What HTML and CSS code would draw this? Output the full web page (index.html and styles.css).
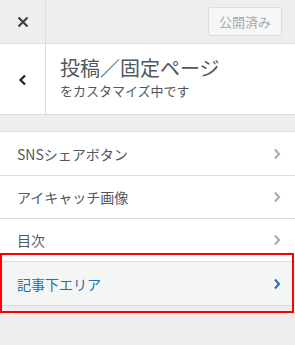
FILE: index.html
```html
<!DOCTYPE html>
<html lang="ja">
<head>
<meta charset="utf-8">
<link rel="stylesheet" href="styles.css">
</head>
<body>
<div class="panel">
  <div class="topbar">
    <div class="close">
      <svg width="12" height="12" viewBox="0 0 12 12"><path d="M1.5 1.5 L10.5 10.5 M10.5 1.5 L1.5 10.5" stroke="#3c434a" stroke-width="2.2" stroke-linecap="butt"/></svg>
    </div>
    <div class="publish">公開済み</div>
  </div>
  <div class="header">
    <div class="back">
      <svg width="10" height="12" viewBox="0 0 10 12"><path d="M7 1.5 L2.5 6 L7 10.5" fill="none" stroke="#1d2327" stroke-width="2.2"/></svg>
    </div>
    <div class="titles">
      <div class="title">投稿／固定ページ</div>
      <div class="sub">をカスタマイズ中です</div>
    </div>
  </div>
  <ul class="sections">
    <li class="item"><span>SNSシェアボタン</span><svg class="chev" width="8" height="12" viewBox="0 0 8 12"><path d="M2 1.5 L6 6 L2 10.5" fill="none" stroke="#a7aaad" stroke-width="2"/></svg></li>
    <li class="item"><span>アイキャッチ画像</span><svg class="chev" width="8" height="12" viewBox="0 0 8 12"><path d="M2 1.5 L6 6 L2 10.5" fill="none" stroke="#a7aaad" stroke-width="2"/></svg></li>
    <li class="item"><span>目次</span><svg class="chev" width="8" height="12" viewBox="0 0 8 12"><path d="M2 1.5 L6 6 L2 10.5" fill="none" stroke="#a7aaad" stroke-width="2"/></svg></li>
    <li class="item active"><span>記事下エリア</span><svg class="chev" width="8" height="12" viewBox="0 0 8 12"><path d="M2 1.5 L6 6 L2 10.5" fill="none" stroke="#2c6cab" stroke-width="2"/></svg></li>
  </ul>
  <div class="highlight"></div>
</div>
</body>
</html>
```
FILE: styles.css
```css
* { box-sizing: border-box; }
html, body { margin: 0; padding: 0; }
body {
  background: #eeeeee;
  font-family: "Noto Sans CJK JP", "Noto Sans", sans-serif;
  width: 295px;
  height: 345px;
  overflow: hidden;
}
.panel { position: relative; width: 295px; height: 345px; }
.topbar {
  height: 44px;
  display: flex;
  align-items: center;
  border-bottom: 1px solid #dddddd;
  background: #eeeeee;
}
.close {
  width: 46px;
  height: 43px;
  border-right: 1px solid #dddddd;
  display: flex;
  align-items: center;
  justify-content: center;
}
.publish {
  margin-left: auto;
  margin-right: 13px;
  width: 74px;
  height: 29px;
  border: 1px solid #dcdcde;
  border-radius: 3px;
  background: #f6f7f7;
  color: #a7aaad;
  font-size: 13px;
  line-height: 27px;
  text-align: center;
}
.header {
  display: flex;
  height: 71px;
  background: #ffffff;
  border-bottom: 1px solid #dddddd;
}
.back {
  width: 46px;
  border-right: 1px solid #dddddd;
  display: flex;
  align-items: center;
  justify-content: center;
  padding-top: 2px;
}
.titles { padding: 11px 0 0 14px; color: #50575e; }
.title { font-size: 20px; line-height: 26px; }
.sub { font-size: 13px; line-height: 18px; margin-top: 1px; }
.sections {
  list-style: none;
  margin: 16px 0 0;
  padding: 0;
  border-top: 1px solid #dddddd;
}
.item {
  height: 44px;
  display: flex;
  align-items: center;
  justify-content: space-between;
  padding: 0 14px 0 17px;
  background: #ffffff;
  border-bottom: 1px solid #dddddd;
  color: #50575e;
  font-size: 14px;
  line-height: 20px;
}
.item:nth-child(2), .item:nth-child(3) { height: 43px; }
.item.active { background: #f4f6f6; color: #2c6cab; }
.chev { display: block; }
.highlight {
  position: absolute;
  left: 0;
  top: 253px;
  width: 294px;
  height: 60px;
  border: 2px solid #ff0000;
}
```
